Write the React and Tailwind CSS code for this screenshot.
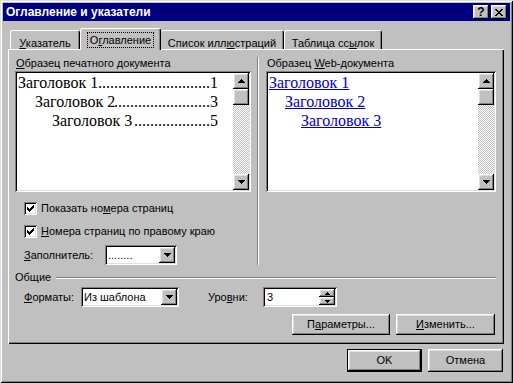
const raised = "bg-[#c0c0c0] shadow-[inset_-1px_-1px_#000,inset_1px_1px_#fff,inset_-2px_-2px_#808080,inset_2px_2px_#dfdfdf]";
const sunken = "bg-white shadow-[inset_1px_1px_#808080,inset_-1px_-1px_#fff,inset_2px_2px_#000,inset_-2px_-2px_#dfdfdf]";

function U({ children }) {
  return <span className="underline">{children}</span>;
}

function DownArrow() {
  return (
    <svg width="7" height="4" viewBox="0 0 7 4">
      <path d="M0 0h7v1h-1v1h-1v1h-1v1h-1v-1h-1v-1h-1v-1h-1z" fill="#000" />
    </svg>
  );
}

function UpArrow() {
  return (
    <svg width="7" height="4" viewBox="0 0 7 4">
      <path d="M3 0h1v1h1v1h1v1h1v1h-7v-1h1v-1h1v-1h1z" fill="#000" />
    </svg>
  );
}

function ScrollBar() {
  return (
    <div className="w-4 shrink-0 flex flex-col">
      <div className={`w-4 h-4 flex items-center justify-center ${raised}`}>
        <UpArrow />
      </div>
      <div className={`w-4 h-4 ${raised}`} />
      <div className="flex-1 bg-[repeating-conic-gradient(#c0c0c0_0_25%,#fff_0_50%)] bg-[length:2px_2px]" />
      <div className={`w-4 h-4 flex items-center justify-center ${raised}`}>
        <DownArrow />
      </div>
    </div>
  );
}

function Combo({ width, value }) {
  return (
    <div className={`h-[20px] flex items-center p-[2px] ${sunken} ${width}`}>
      <span className="flex-1 pl-[1px] whitespace-nowrap">{value}</span>
      <div className={`w-4 h-4 flex items-center justify-center ${raised}`}>
        <DownArrow />
      </div>
    </div>
  );
}

function Check({ children }) {
  return (
    <div className="flex items-center h-[13px] ml-[9px] gap-[4px]">
      <div className={`w-[13px] h-[13px] flex items-center justify-center ${sunken}`}>
        <svg width="7" height="7" viewBox="0 0 7 7">
          <path
            d="M0 2h1v3h-1z M1 3h1v3h-1z M2 4h1v3h-1z M3 3h1v3h-1z M4 2h1v3h-1z M5 1h1v3h-1z M6 0h1v3h-1z"
            fill="#000"
          />
        </svg>
      </div>
      <span className="whitespace-nowrap">{children}</span>
    </div>
  );
}

// leader dots sized to fill each line up to the page number
function TocLine({ indent, title, page, count }) {
  return (
    <div className={`flex min-w-0 ${indent}`}>
      <span className="whitespace-nowrap shrink-0">{title}</span>
      <span className="flex-1 min-w-0 flex justify-end overflow-hidden">
        <span className="whitespace-nowrap">{".".repeat(count)}</span>
      </span>
      <span className="shrink-0">{page}</span>
    </div>
  );
}

export default function App() {
  return (
    <div className="w-[513px] h-[383px] bg-[#c0c0c0] p-[3px] flex flex-col overflow-hidden text-[11px] text-black font-['Liberation_Sans',Arial,sans-serif] shadow-[inset_1px_1px_#dfdfdf,inset_-1px_-1px_#000,inset_2px_2px_#fff,inset_-2px_-2px_#808080]">
      {/* Title bar */}
      <div className="h-[18px] bg-[#000080] flex items-center pl-[3px] pr-[3px]">
        <span className="flex-1 text-white font-bold text-[12px] leading-none">Оглавление и указатели</span>
        <div className={`w-4 h-[14px] flex items-center justify-center font-bold text-[12px] leading-none ${raised}`}>?</div>
        <div className={`w-4 h-[14px] ml-[2px] flex items-center justify-center ${raised}`}>
          <svg width="8" height="7" viewBox="0 0 8 7">
            <path
              d="M0 0h2v1h-2z M6 0h2v1h-2z M1 1h2v1h-2z M5 1h2v1h-2z M2 2h4v1h-4z M3 3h2v1h-2z M2 4h4v1h-4z M1 5h2v1h-2z M5 5h2v1h-2z M0 6h2v1h-2z M6 6h2v1h-2z"
              fill="#000"
            />
          </svg>
        </div>
      </div>

      <div className="mt-[7px] ml-[5px] mr-[6px] flex flex-col">
        {/* Tabs */}
        <div className="h-[21px] flex items-end pl-[2px]">
          <div className="w-[70px] h-[19px] flex justify-center pt-[4px] border-l border-t border-white border-r border-r-black rounded-t-[3px] shadow-[inset_-1px_0_#808080]">
            <span><U>У</U>казатель</span>
          </div>
          <div className="w-[81px] h-[22px] -mb-px relative z-10 bg-[#c0c0c0] flex justify-center pt-[3px] border-l border-t border-white border-r border-r-black rounded-t-[3px] shadow-[inset_-1px_0_#808080]">
            <span className="h-[16px] leading-[14px] px-[2px] border border-dotted border-black">
              О<U>г</U>лавление
            </span>
          </div>
          <div className="w-[123px] h-[19px] flex justify-center pt-[4px] border-t border-white border-r border-r-black rounded-t-[3px] shadow-[inset_-1px_0_#808080]">
            <span>Список илл<U>ю</U>страций</span>
          </div>
          <div className="w-[98px] h-[19px] flex justify-center pt-[4px] border-l border-t border-white border-r border-r-black rounded-t-[3px] shadow-[inset_-1px_0_#808080]">
            <span>Таблица сс<U>ы</U>лок</span>
          </div>
        </div>

        {/* Panel */}
        <div className="h-[295px] flex flex-col pl-[7px] pr-[8px] pt-[8px] shadow-[inset_1px_1px_#fff,inset_-1px_-1px_#000,inset_-2px_-2px_#808080]">
          <div className="flex">
            <div className="w-[236px] flex flex-col">
              <div className="leading-[13px] pl-[1px]"><U>О</U>бразец печатного документа</div>
              <div className={`mt-[1px] h-[121px] flex p-[2px] ${sunken}`}>
                <div className="flex-1 min-w-0 pl-[1px] pr-[15px] text-[16px] leading-[19px] font-['Liberation_Serif','Times_New_Roman',serif]">
                  <TocLine indent="" title="Заголовок 1" page="1" count={28} />
                  <TocLine indent="pl-[17px]" title="Заголовок 2" page="3" count={24} />
                  <TocLine indent="pl-[34px]" title="Заголовок 3" page="5" count={19} />
                </div>
                <ScrollBar />
              </div>
              <div className="mt-[10px]">
                <Check>Показать но<U>м</U>ера страниц</Check>
              </div>
              <div className="mt-[10px]">
                <Check><U>Н</U>омера страниц по правому краю</Check>
              </div>
              <div className="mt-[7px] ml-[9px] flex items-center h-[20px]">
                <span className="w-[81px]"><U>З</U>аполнитель:</span>
                <Combo width="w-[72px]" value="........" />
              </div>
            </div>

            <div className="ml-[6px] w-[2px] border-l border-l-[#808080] border-r border-r-white" />

            <div className="ml-[7px] w-[230px] flex flex-col">
              <div className="leading-[13px] pl-[1px]">Образец <U>W</U>eb-документа</div>
              <div className={`mt-[1px] h-[121px] flex p-[2px] ${sunken}`}>
                <div className="flex-1 min-w-0 pl-[1px] text-[16px] leading-[19px] text-[#0000c8] underline font-['Liberation_Serif','Times_New_Roman',serif]">
                  <div>Заголовок 1</div>
                  <div className="pl-[16px]">Заголовок 2</div>
                  <div className="pl-[32px]">Заголовок 3</div>
                </div>
                <ScrollBar />
              </div>
            </div>
          </div>

          {/* General group */}
          <div className="mt-[6px] flex items-center h-[13px]">
            <span>Общие</span>
            <div className="flex-1 ml-[5px] h-[2px] border-t border-t-[#808080] border-b border-b-white" />
          </div>
          <div className="mt-[3px] pl-[9px] flex items-center h-[20px]">
            <span className="w-[57px]"><U>Ф</U>орматы:</span>
            <Combo width="w-[98px]" value="Из шаблона" />
            <span className="ml-[29px] w-[55px]">Уро<U>в</U>ни:</span>
            <div className={`w-[74px] h-[20px] flex p-[2px] ${sunken}`}>
              <span className="flex-1 pl-[2px] leading-[16px]">3</span>
              <div className="w-4 flex flex-col">
                <div className={`h-[8px] flex items-center justify-center ${raised}`}>
                  <svg width="5" height="3" viewBox="0 0 5 3">
                    <path d="M2 0h1v1h1v1h1v1h-5v-1h1v-1h1z" fill="#000" />
                  </svg>
                </div>
                <div className={`h-[8px] flex items-center justify-center ${raised}`}>
                  <svg width="5" height="3" viewBox="0 0 5 3">
                    <path d="M0 0h5v1h-1v1h-1v1h-1v-1h-1v-1h-1z" fill="#000" />
                  </svg>
                </div>
              </div>
            </div>
          </div>
          <div className="mt-[7px] flex justify-end gap-[6px] pr-[1px]">
            <button className={`w-[98px] h-[21px] ${raised}`}>П<U>а</U>раметры...</button>
            <button className={`w-[99px] h-[21px] ${raised}`}><U>И</U>зменить...</button>
          </div>
        </div>
      </div>

      {/* Dialog buttons */}
      <div className="mt-[5px] flex justify-end gap-[6px] pr-[7px]">
        <button className="w-[75px] h-[23px] border border-black flex">
          <span className={`flex-1 flex items-center justify-center ${raised}`}>OK</span>
        </button>
        <button className={`w-[75px] h-[23px] ${raised}`}>Отмена</button>
      </div>
    </div>
  );
}
